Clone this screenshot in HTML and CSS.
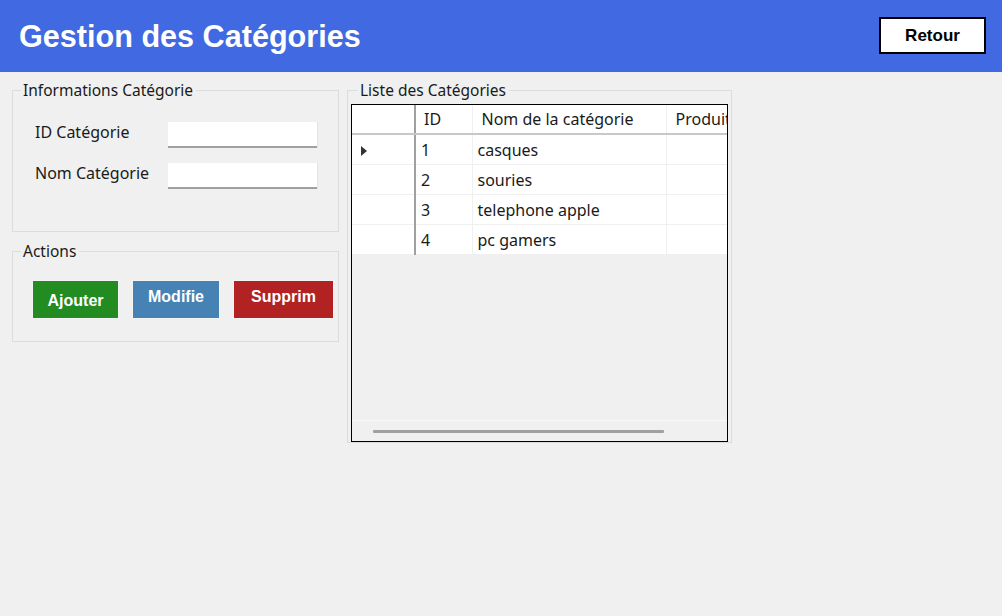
FILE: index.html
```html
<!DOCTYPE html>
<html lang="fr">
<head>
<meta charset="utf-8">
<title>Gestion des Catégories</title>
<link rel="stylesheet" href="styles.css">
</head>
<body>
<header class="topbar">
  <h1 class="title">Gestion des Catégories</h1>
  <button class="back-btn">Retour</button>
</header>
<main class="content">
  <div class="left-col">
    <fieldset class="group info-group">
      <legend>Informations Catégorie</legend>
      <div class="group-inner info-inner">
        <div class="field-row">
          <label class="field-label">ID Catégorie</label>
          <div class="text-input"></div>
        </div>
        <div class="field-row">
          <label class="field-label">Nom Catégorie</label>
          <div class="text-input"></div>
        </div>
      </div>
    </fieldset>
    <fieldset class="group actions-group">
      <legend>Actions</legend>
      <div class="group-inner actions">
        <button class="act act-add">Ajouter</button>
        <button class="act act-edit">Modifie</button>
        <button class="act act-del">Supprim</button>
      </div>
    </fieldset>
  </div>
  <fieldset class="group list-group">
    <legend>Liste des Catégories</legend>
    <div class="grid">
      <div class="grid-body">
        <table class="grid-table">
          <colgroup>
            <col class="c-rh"><col class="c-id"><col class="c-name"><col class="c-prod">
          </colgroup>
          <thead>
            <tr><th class="rh"></th><th>ID</th><th>Nom de la catégorie</th><th>Produits</th></tr>
          </thead>
          <tbody>
            <tr><td class="rh"><span class="arrow"></span></td><td>1</td><td>casques</td><td></td></tr>
            <tr><td class="rh"></td><td>2</td><td>souries</td><td></td></tr>
            <tr><td class="rh"></td><td>3</td><td>telephone apple</td><td></td></tr>
            <tr><td class="rh"></td><td>4</td><td>pc gamers</td><td></td></tr>
          </tbody>
        </table>
      </div>
      <div class="hscroll"><div class="thumb"></div></div>
    </div>
  </fieldset>
</main>
</body>
</html>
```
FILE: styles.css
```css
html, body {
  margin: 0;
  padding: 0;
  background: #f0f0f0;
  font-family: "Noto Sans", "Liberation Sans", sans-serif;
  color: #000;
}
.topbar {
  height: 72px;
  background: #4169e1;
  display: flex;
  align-items: center;
  justify-content: space-between;
  padding: 0 16px 0 19px;
  box-sizing: border-box;
}
.title {
  margin: 0;
  color: #fff;
  font-family: "Liberation Sans", Arial, sans-serif;
  font-weight: bold;
  font-size: 30.6px;
}
.back-btn {
  width: 107px;
  height: 37px;
  background: #fff;
  border: 2px solid #000;
  font-family: "Liberation Sans", Arial, sans-serif;
  font-weight: bold;
  font-size: 17px;
  color: #000;
  padding: 0;
  margin-top: -1px;
}
.content {
  display: flex;
  align-items: flex-start;
  padding: 9px 0 0 12px;
  gap: 8px;
}
.left-col {
  display: flex;
  flex-direction: column;
  gap: 10px;
  width: 327px;
}
.group {
  margin: 0;
  padding: 0;
  min-width: 0;
  border: 1px solid #dcdcdc;
  box-sizing: border-box;
  font-size: 15.5px;
}
.group legend {
  padding: 0 3px 0 2px;
  margin-left: 8px;
  line-height: 18px;
  color: #1a1a1a;
}
.info-group {
  height: 151px;
}
.info-inner {
  padding: 23px 0 0 22px;
}
.field-row {
  display: flex;
  align-items: center;
  height: 26px;
  margin-bottom: 15px;
}
.field-label {
  width: 133px;
  font-size: 16px;
  color: #1a1a1a;
  position: relative;
  top: -3px;
}
.text-input {
  width: 149px;
  height: 24px;
  background: #fff;
  border-bottom: 2px solid #a0a0a0;
  box-shadow: 1px 0 0 #e4e4e4;
}
.actions-group {
  height: 100px;
}
.actions {
  display: flex;
  gap: 13px;
  padding: 20px 0 0 19px;
}
.act {
  height: 39px;
  border: 1px solid #f4f4f4;
  color: #fff;
  font-family: "Liberation Sans", Arial, sans-serif;
  font-weight: bold;
  font-size: 16px;
  padding: 0;
}
.act-add { width: 87px; background: #228b22; padding-top: 2px; }
.act-edit { width: 88px; background: #4682b4; padding-bottom: 6px; }
.act-del { width: 101px; background: #b22222; padding-bottom: 6px; }
.list-group {
  width: 385px;
  height: 362px;
  padding: 5px 3px 0 3px;
}
.list-group legend {
  margin-left: 7px;
}
.grid {
  height: 338px;
  border: 1px solid #000;
  box-sizing: border-box;
  display: flex;
  flex-direction: column;
  overflow: hidden;
  background: #f0f0f0;
}
.grid-body {
  flex: 1;
  overflow: hidden;
}
.grid-table {
  border-collapse: collapse;
  table-layout: fixed;
  width: 414px;
  font-size: 16px;
}
.c-rh { width: 63px; }
.c-id { width: 57px; }
.c-name { width: 194px; }
.c-prod { width: 100px; }
.grid-table th, .grid-table td {
  height: 29px;
  padding: 0 0 0 5px;
  text-align: left;
  font-weight: normal;
  background: #fff;
  white-space: nowrap;
  overflow: hidden;
  border-right: 1px solid #f0f0f0;
  border-bottom: 1px solid #f0f0f0;
  color: #1a1a1a;
}
.grid-table th {
  border-bottom: 2px solid #c8c8c8;
  height: 28px;
  padding-left: 9px;
}
.grid-table th.rh, .grid-table td.rh {
  border-right: 2px solid #a0a0a0;
  padding-left: 9px;
}
.grid-table th:nth-child(2) { padding-left: 8px; }
.arrow {
  display: inline-block;
  width: 0;
  height: 0;
  border-top: 5px solid transparent;
  border-bottom: 5px solid transparent;
  border-left: 6px solid #333;
  vertical-align: middle;
}
.hscroll {
  height: 20px;
  border-top: 1px solid #fafafa;
  display: flex;
  align-items: center;
  padding-left: 21px;
}
.thumb {
  width: 291px;
  height: 3px;
  background: #a0a0a0;
  border-radius: 1px;
}
```
